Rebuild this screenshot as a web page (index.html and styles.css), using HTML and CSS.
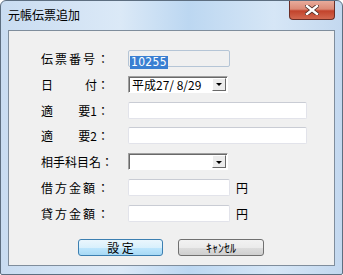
FILE: index.html
```html
<!DOCTYPE html>
<html lang="ja">
<head>
    <meta charset="UTF-8">
    <title>元帳伝票追加</title>
    <link rel="stylesheet" href="styles.css">
</head>
<body>
    <div class="window">
        <div class="titlebar">
            <span class="title">元帳伝票追加</span>
            <div class="close-btn">
                <svg width="14" height="10" viewBox="0 0 14 10">
                    <path d="M2 1 L12 9 M12 1 L2 9" stroke="#4a2a24" stroke-width="4" stroke-linecap="square"/>
                    <path d="M2 1 L12 9 M12 1 L2 9" stroke="#ffffff" stroke-width="2.4" stroke-linecap="square"/>
                </svg>
            </div>
        </div>

        <div class="client">
            <div class="form">
                <div class="label"><span>伝</span><span>票</span><span>番</span><span>号</span><span>：</span></div>
                <div class="field">
                    <div class="textbox readonly short"><span class="selected">10255</span></div>
                </div>

                <div class="label"><span>日</span><span>付：</span></div>
                <div class="field">
                    <div class="combo">
                        <span class="combo-text">平成27/ 8/29</span>
                        <span class="combo-btn"><i class="arrow"></i></span>
                    </div>
                </div>

                <div class="label"><span>適</span><span>要1：</span></div>
                <div class="field"><div class="textbox long"></div></div>

                <div class="label"><span>適</span><span>要2：</span></div>
                <div class="field"><div class="textbox long"></div></div>

                <div class="label"><span>相</span><span>手</span><span>科</span><span>目</span><span>名</span><span>：</span></div>
                <div class="field">
                    <div class="combo">
                        <span class="combo-text"></span>
                        <span class="combo-btn"><i class="arrow"></i></span>
                    </div>
                </div>

                <div class="label"><span>借</span><span>方</span><span>金</span><span>額</span><span>：</span></div>
                <div class="field">
                    <div class="textbox short"></div>
                    <span class="unit">円</span>
                </div>

                <div class="label"><span>貸</span><span>方</span><span>金</span><span>額</span><span>：</span></div>
                <div class="field">
                    <div class="textbox short"></div>
                    <span class="unit">円</span>
                </div>
            </div>

            <div class="buttons">
                <button type="button" class="btn default">設 定</button>
                <button type="button" class="btn">ｷｬﾝｾﾙ</button>
            </div>
        </div>
    </div>
</body>
</html>
```

FILE: styles.css
```css
body, html {
    margin: 0;
    padding: 0;
    background-color: #ffffff;
}

body {
    font-family: "Noto Sans CJK JP", "DejaVu Sans", sans-serif;
    font-size: 12px;
    color: #000;
}

.window {
    width: 343px;
    height: 275px;
    box-sizing: border-box;
    border: 1px solid #5d6e80;
    border-radius: 6px 6px 2px 2px;
    background: linear-gradient(to right, #c9dcf1 0%, #dbe9f7 35%, #bcd7f1 55%, #d6e6f6 80%, #c3d8ef 100%);
    padding: 0 7px 8px 7px;
    display: flex;
    flex-direction: column;
}

.titlebar {
    height: 29px;
    display: flex;
    justify-content: space-between;
    align-items: flex-start;
}

.title {
    margin-top: 6px;
    font-size: 12px;
    line-height: 16px;
    color: #000;
}

.close-btn {
    width: 46px;
    height: 19px;
    box-sizing: border-box;
    border: 1px solid #6b2e26;
    border-top: none;
    border-radius: 0 0 4px 4px;
    background: linear-gradient(to bottom, #e8ab9b 0%, #dc8a76 45%, #c2432c 55%, #d2684f 100%);
    display: flex;
    align-items: center;
    justify-content: center;
}

.client {
    flex: 1;
    background-color: #f0f0f0;
    border: 1px solid #7f8d9c;
    padding: 19px 0 0 32px;
    box-sizing: border-box;
}

.form {
    display: grid;
    grid-template-columns: 70px auto;
    column-gap: 17px;
    grid-auto-rows: 17px;
    row-gap: 8.8px;
}

.label {
    display: flex;
    justify-content: space-between;
    align-items: center;
    line-height: 17px;
    padding-right: 2px;
}

.field {
    display: flex;
    align-items: center;
}

.textbox {
    height: 17px;
    box-sizing: border-box;
    background-color: #ffffff;
    border: 1px solid #e2e3ea;
    border-top-color: #c9ccd4;
    border-radius: 2px;
}

.textbox.short {
    width: 102px;
}

.textbox.long {
    width: 179px;
}

.textbox.readonly {
    background-color: #f0f0f0;
    border-color: #b5c5d6;
    padding: 1px 0 0 1px;
}

.selected {
    display: inline-block;
    background-color: #3a7fd2;
    color: #ffffff;
    font-family: "Liberation Sans Narrow", "DejaVu Sans Condensed", sans-serif;
    font-size: 12px;
    line-height: 13px;
    padding: 0 1px;
    letter-spacing: 0.3px;
}

.combo {
    width: 100px;
    height: 17px;
    box-sizing: border-box;
    background-color: #ffffff;
    border: 1px solid;
    border-color: #a0a0a0 #ffffff #ffffff #a0a0a0;
    box-shadow: inset 1px 1px 0 #696969;
    display: flex;
    align-items: center;
    justify-content: space-between;
    padding: 1px 1px 1px 3px;
}

.combo-text {
    font-size: 12px;
    line-height: 15px;
    white-space: nowrap;
}

.combo-btn {
    width: 14px;
    height: 13px;
    box-sizing: border-box;
    background-color: #ececec;
    border: 1px solid;
    border-color: #ffffff #696969 #696969 #ffffff;
    display: flex;
    align-items: center;
    justify-content: center;
}

.arrow {
    width: 0;
    height: 0;
    border-left: 3px solid transparent;
    border-right: 3px solid transparent;
    border-top: 3px solid #000;
    margin-top: 1px;
}

.unit {
    margin-left: 6px;
    line-height: 17px;
}

.buttons {
    display: flex;
    gap: 15px;
    margin: 17px 0 0 37px;
}

.btn {
    width: 86px;
    height: 17px;
    padding: 0;
    box-sizing: border-box;
    font-family: "Noto Sans CJK JP", sans-serif;
    font-size: 12px;
    line-height: 15px;
    color: #000;
    border: 1px solid #707070;
    border-radius: 3px;
    background: linear-gradient(to bottom, #f2f2f2 0%, #ebebeb 50%, #dddddd 51%, #cfcfcf 100%);
}

.btn.default {
    width: 85px;
    border-color: #3c7fb1;
    background: linear-gradient(to bottom, #eaf6fd 0%, #d9f0fc 50%, #bee6fd 51%, #a7d9f5 100%);
}
```
